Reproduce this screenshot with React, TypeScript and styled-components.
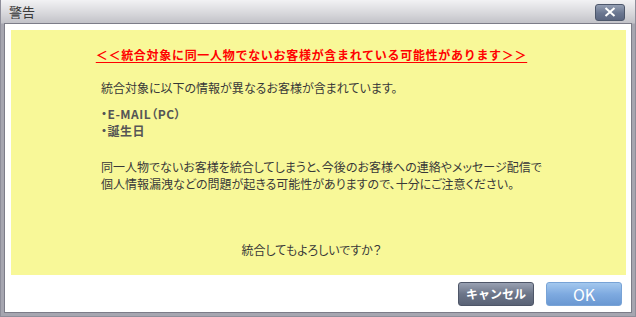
import styled, { createGlobalStyle } from 'styled-components';

const GlobalStyle = createGlobalStyle`
  html, body {
    margin: 0;
    padding: 0;
    background: #ffffff;
  }
  body {
    font-family: 'Noto Sans CJK JP', 'Noto Sans', sans-serif;
  }
`;

const Dialog = styled.div`
  box-sizing: border-box;
  width: 636px;
  height: 317px;
  display: flex;
  flex-direction: column;
  padding: 0 3px 3px 3px;
  background: linear-gradient(#f2f2f4 0px, #d6d6da 14px, #c2c2c8 23px, #a6a6b0 24px, #a6a6b0 100%);
  border-left: 1px solid #8e8e9a;
  border-right: 1px solid #8e8e9a;
  border-bottom: 1px solid #8e8e9a;
`;

const TitleBar = styled.div`
  height: 23px;
  display: flex;
  align-items: center;
  justify-content: space-between;
  padding: 0 7px 0 5px;
  flex-shrink: 0;
`;

const Title = styled.span`
  font-size: 13px;
  color: #3a3a3a;
  line-height: 23px;
`;

const CloseButton = styled.button`
  box-sizing: border-box;
  width: 30px;
  height: 17px;
  margin-top: 1px;
  padding: 0;
  border: 1px solid #4d576b;
  border-radius: 3px;
  background: linear-gradient(#95a0b4, #6a7690 55%, #5b6680);
  display: flex;
  align-items: center;
  justify-content: center;
`;

const Body = styled.div`
  flex: 1;
  display: flex;
  flex-direction: column;
  background: #ffffff;
  border: 1px solid #7c7c88;
  padding: 6px 5px 6px 6px;
`;

const Notice = styled.div`
  height: 245px;
  box-sizing: border-box;
  background: #f8f898;
  padding: 16px 20px 0 90px;
  display: flex;
  flex-direction: column;
`;

const Warning = styled.div`
  margin-left: -84px;
  text-align: center;
  font-size: 12px;
  line-height: 17px;
  font-weight: bold;
  color: #ff0000;
  text-decoration: underline;
  text-underline-offset: 2px;
  letter-spacing: 0.7px;
`;

const Text = styled.p<{ $gap: number }>`
  margin: ${(p) => p.$gap}px 0 0 0;
  font-size: 12px;
  line-height: 17px;
  color: #383838;
  font-feature-settings: 'palt';
`;

const ItemList = styled.ul`
  list-style: none;
  margin: 9px 0 0 0;
  padding: 0;
`;

const Item = styled.li`
  font-size: 12px;
  line-height: 17px;
  font-weight: bold;
  color: #555555;
  letter-spacing: 0.5px;
  font-feature-settings: 'palt';
`;

const Question = styled.p`
  margin: 49px 0 0 -84px;
  text-align: center;
  font-size: 12px;
  line-height: 17px;
  color: #383838;
  font-feature-settings: 'palt';
`;

const Footer = styled.div`
  flex: 1;
  display: flex;
  justify-content: flex-end;
  align-items: flex-start;
  gap: 12px;
  padding: 7px 4px 0 0;
`;

const ActionButton = styled.button<{ $primary?: boolean }>`
  box-sizing: border-box;
  width: 76px;
  height: 24px;
  padding: 0;
  border-radius: 3px;
  font-family: 'Noto Sans CJK JP', 'Noto Sans', sans-serif;
  color: #ffffff;
  border: 1px solid ${(p) => (p.$primary ? '#78a3d6' : '#4e5668')};
  background: ${(p) =>
    p.$primary
      ? 'linear-gradient(#a4c8ee, #7eaae0 50%, #6a98d2)'
      : 'linear-gradient(#99a1b2, #6c7588 50%, #5a6376)'};
  font-size: ${(p) => (p.$primary ? '16px' : '12px')};
  font-weight: ${(p) => (p.$primary ? 'normal' : 'bold')};
  line-height: 22px;
`;

const App = () => {
  return (
    <>
      <GlobalStyle />
      <Dialog>
        <TitleBar>
          <Title>警告</Title>
          <CloseButton aria-label='close'>
            <svg width='12' height='10' viewBox='0 0 12 10'>
              <path d='M1.5 1 L10.5 9 M10.5 1 L1.5 9' stroke='#ffffff' strokeWidth='2' />
            </svg>
          </CloseButton>
        </TitleBar>
        <Body>
          <Notice>
            <Warning>＜＜統合対象に同一人物でないお客様が含まれている可能性があります＞＞</Warning>
            <Text $gap={16}>統合対象に以下の情報が異なるお客様が含まれています。</Text>
            <ItemList>
              <Item>・E-MAIL（PC）</Item>
              <Item>・誕生日</Item>
            </ItemList>
            <Text $gap={19}>
              同一人物でないお客様を統合してしまうと、今後のお客様への連絡やメッセージ配信で
              <br />
              個人情報漏洩などの問題が起きる可能性がありますので、十分にご注意ください。
            </Text>
            <Question>統合してもよろしいですか？</Question>
          </Notice>
          <Footer>
            <ActionButton>キャンセル</ActionButton>
            <ActionButton $primary>OK</ActionButton>
          </Footer>
        </Body>
      </Dialog>
    </>
  );
};

export default App;
